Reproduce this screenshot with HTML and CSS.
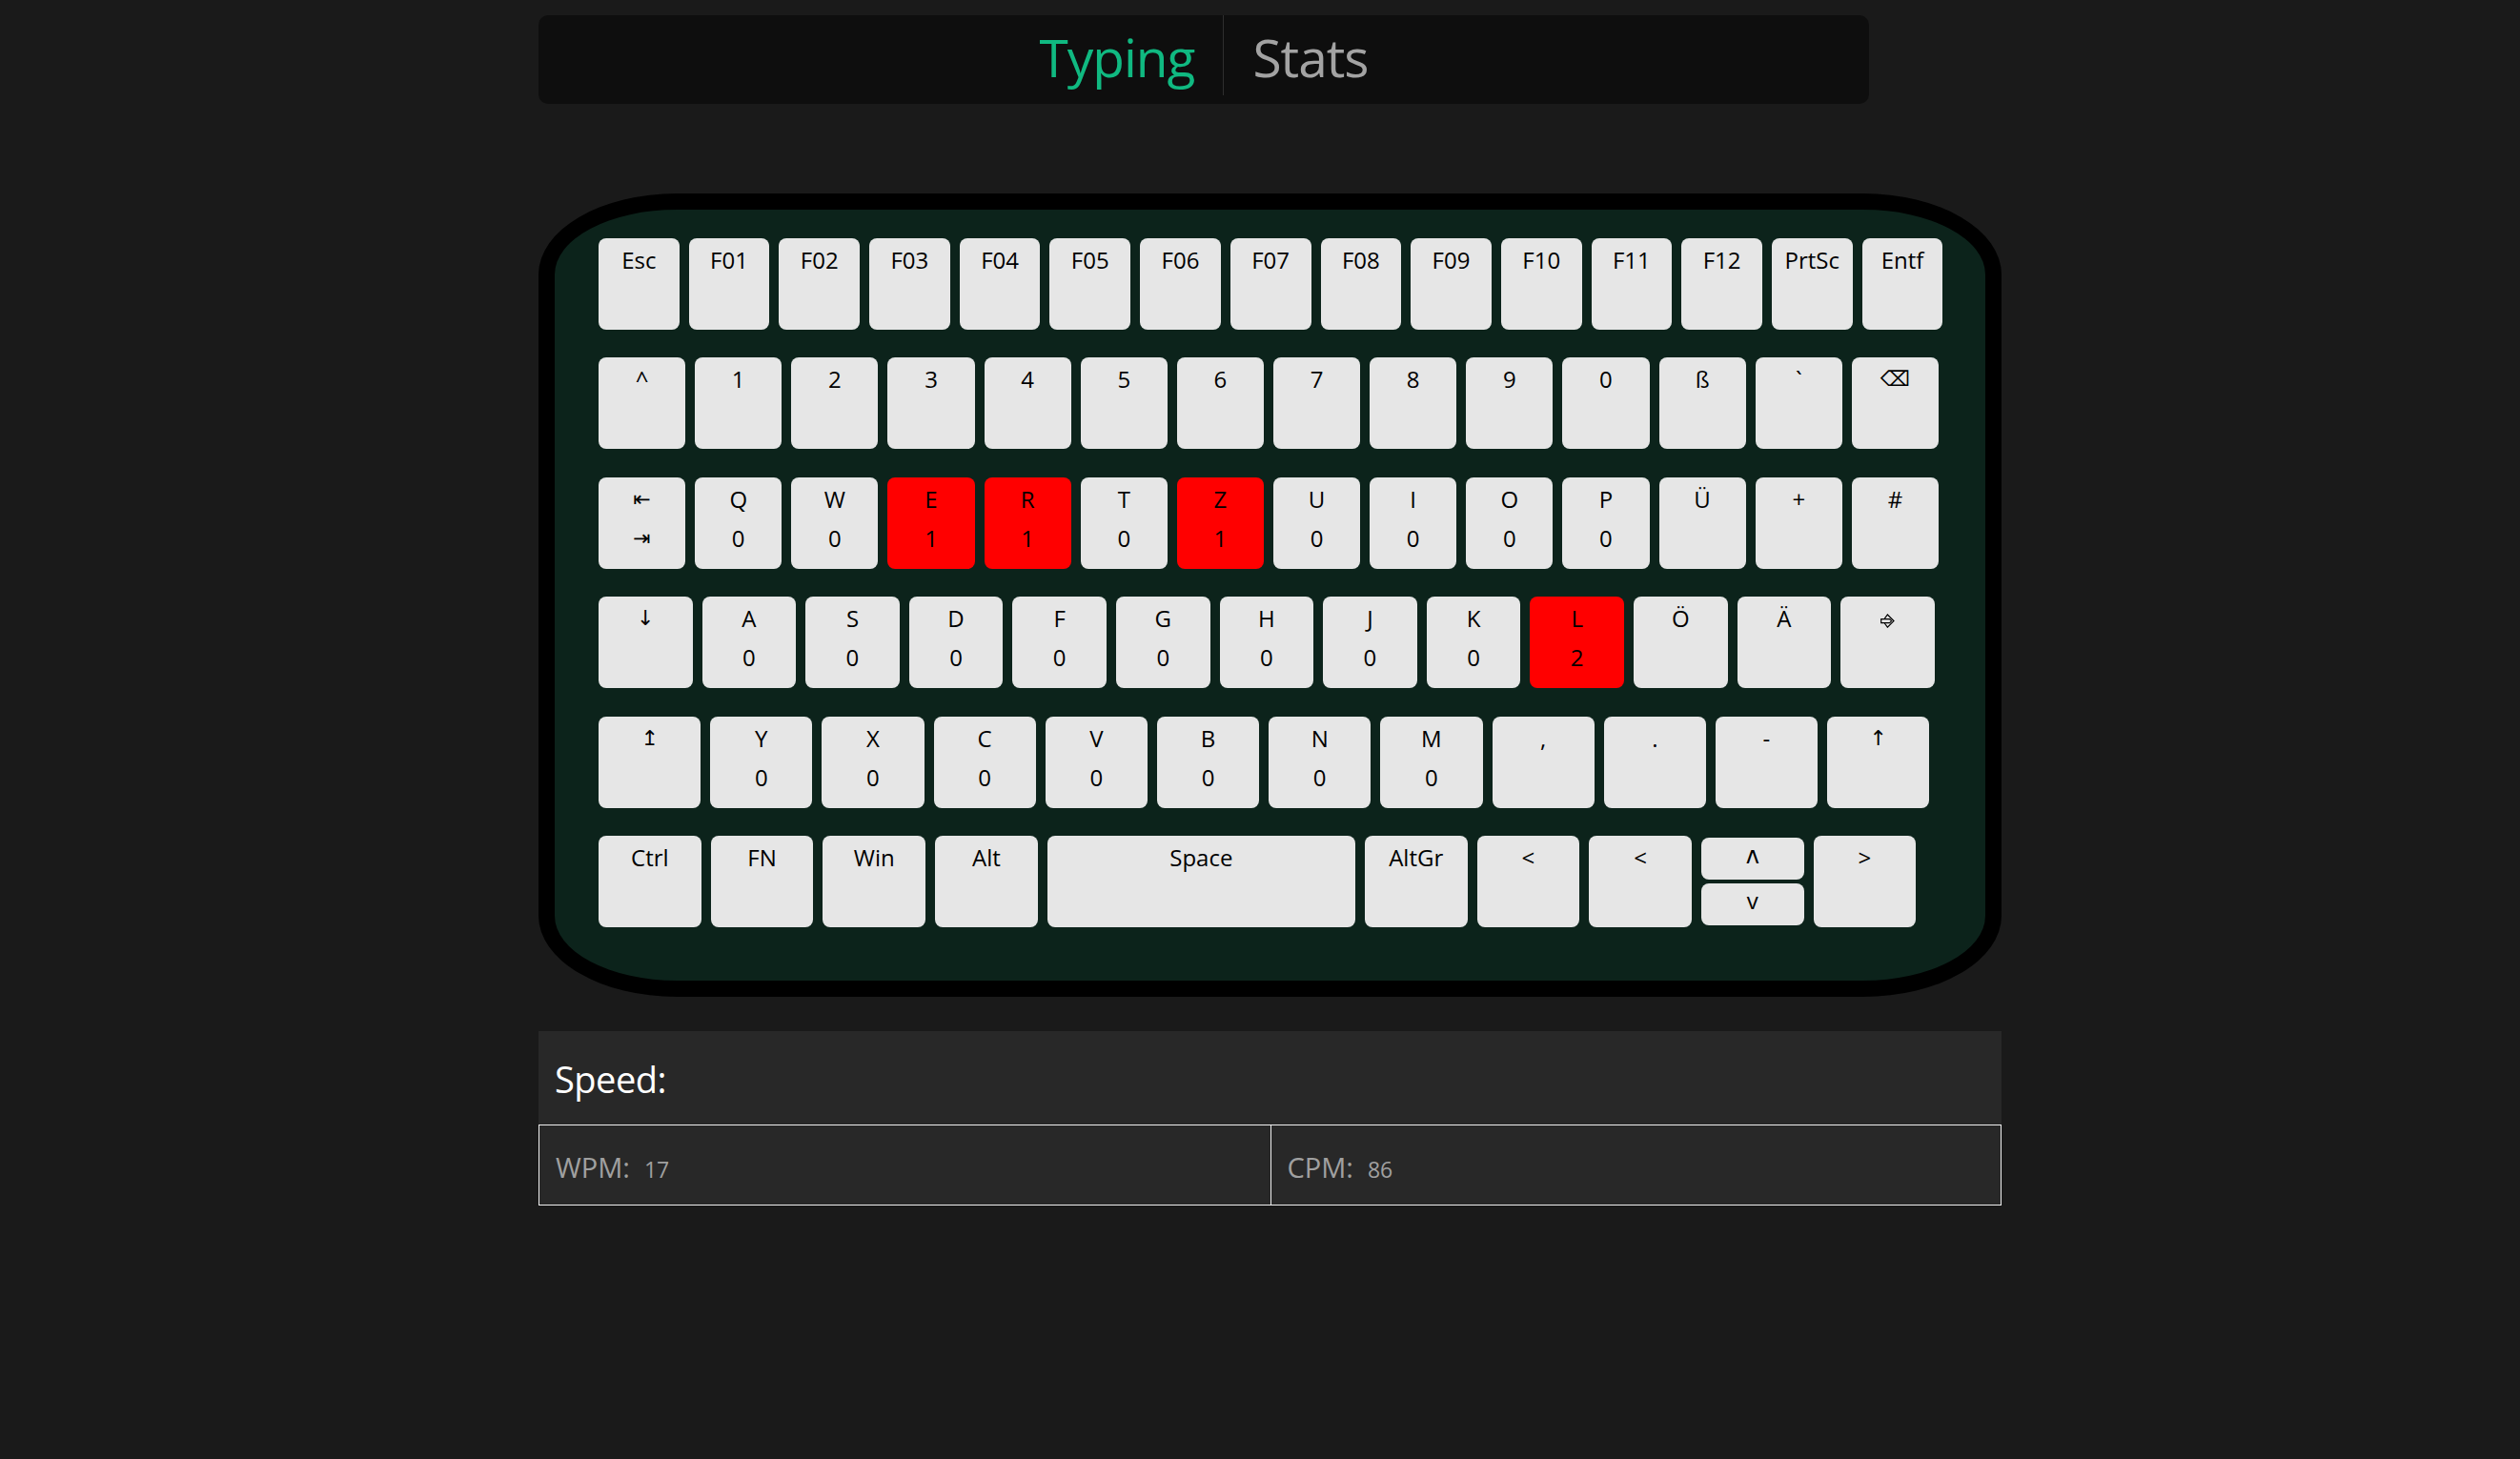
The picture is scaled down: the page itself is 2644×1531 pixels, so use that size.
FILE: index.html
```html
<!DOCTYPE html>
<html lang="de">
<head>
<meta charset="utf-8">
<title>Typing</title>
<link rel="stylesheet" href="styles.css">
</head>
<body>
<div class="page">
  <nav class="nav">
    <div class="tabs">
      <a class="tab active">Typing</a>
      <a class="tab">Stats</a>
    </div>
  </nav>

  <section class="keyboard">
    <div class="row row-f">
      <div class="key"><span class="lbl">Esc</span></div>
      <div class="key"><span class="lbl">F01</span></div>
      <div class="key"><span class="lbl">F02</span></div>
      <div class="key"><span class="lbl">F03</span></div>
      <div class="key"><span class="lbl">F04</span></div>
      <div class="key"><span class="lbl">F05</span></div>
      <div class="key"><span class="lbl">F06</span></div>
      <div class="key"><span class="lbl">F07</span></div>
      <div class="key"><span class="lbl">F08</span></div>
      <div class="key"><span class="lbl">F09</span></div>
      <div class="key"><span class="lbl">F10</span></div>
      <div class="key"><span class="lbl">F11</span></div>
      <div class="key"><span class="lbl">F12</span></div>
      <div class="key"><span class="lbl">PrtSc</span></div>
      <div class="key"><span class="lbl">Entf</span></div>
    </div>
    <div class="row row-n">
      <div class="key"><span class="lbl">^</span></div>
      <div class="key"><span class="lbl">1</span></div>
      <div class="key"><span class="lbl">2</span></div>
      <div class="key"><span class="lbl">3</span></div>
      <div class="key"><span class="lbl">4</span></div>
      <div class="key"><span class="lbl">5</span></div>
      <div class="key"><span class="lbl">6</span></div>
      <div class="key"><span class="lbl">7</span></div>
      <div class="key"><span class="lbl">8</span></div>
      <div class="key"><span class="lbl">9</span></div>
      <div class="key"><span class="lbl">0</span></div>
      <div class="key"><span class="lbl">ß</span></div>
      <div class="key"><span class="lbl">`</span></div>
      <div class="key"><span class="lbl sym">⌫</span></div>
    </div>
    <div class="row row-n">
      <div class="key"><span class="lbl sym">⇤</span><span class="lbl sym">⇥</span></div>
      <div class="key"><span class="lbl">Q</span><span class="lbl">0</span></div>
      <div class="key"><span class="lbl">W</span><span class="lbl">0</span></div>
      <div class="key hit"><span class="lbl">E</span><span class="lbl">1</span></div>
      <div class="key hit"><span class="lbl">R</span><span class="lbl">1</span></div>
      <div class="key"><span class="lbl">T</span><span class="lbl">0</span></div>
      <div class="key hit"><span class="lbl">Z</span><span class="lbl">1</span></div>
      <div class="key"><span class="lbl">U</span><span class="lbl">0</span></div>
      <div class="key"><span class="lbl">I</span><span class="lbl">0</span></div>
      <div class="key"><span class="lbl">O</span><span class="lbl">0</span></div>
      <div class="key"><span class="lbl">P</span><span class="lbl">0</span></div>
      <div class="key"><span class="lbl">Ü</span></div>
      <div class="key"><span class="lbl">+</span></div>
      <div class="key"><span class="lbl">#</span></div>
    </div>
    <div class="row row-a">
      <div class="key"><span class="lbl sym">↓</span></div>
      <div class="key"><span class="lbl">A</span><span class="lbl">0</span></div>
      <div class="key"><span class="lbl">S</span><span class="lbl">0</span></div>
      <div class="key"><span class="lbl">D</span><span class="lbl">0</span></div>
      <div class="key"><span class="lbl">F</span><span class="lbl">0</span></div>
      <div class="key"><span class="lbl">G</span><span class="lbl">0</span></div>
      <div class="key"><span class="lbl">H</span><span class="lbl">0</span></div>
      <div class="key"><span class="lbl">J</span><span class="lbl">0</span></div>
      <div class="key"><span class="lbl">K</span><span class="lbl">0</span></div>
      <div class="key hit"><span class="lbl">L</span><span class="lbl">2</span></div>
      <div class="key"><span class="lbl">Ö</span></div>
      <div class="key"><span class="lbl">Ä</span></div>
      <div class="key"><span class="lbl"><svg class="enter" viewBox="0 0 15 15" width="15" height="15"><path d="M4.3 5.2 L7.4 1 L14 7.6 L7.4 14.2 L4.3 10"/><path d="M0.7 5.6 H9.6 L11.6 7.6 L9.6 9.6 H0.7 Z"/></svg></span></div>
    </div>
    <div class="row row-y">
      <div class="key"><span class="lbl sym">↥</span></div>
      <div class="key"><span class="lbl">Y</span><span class="lbl">0</span></div>
      <div class="key"><span class="lbl">X</span><span class="lbl">0</span></div>
      <div class="key"><span class="lbl">C</span><span class="lbl">0</span></div>
      <div class="key"><span class="lbl">V</span><span class="lbl">0</span></div>
      <div class="key"><span class="lbl">B</span><span class="lbl">0</span></div>
      <div class="key"><span class="lbl">N</span><span class="lbl">0</span></div>
      <div class="key"><span class="lbl">M</span><span class="lbl">0</span></div>
      <div class="key"><span class="lbl">,</span></div>
      <div class="key"><span class="lbl">.</span></div>
      <div class="key"><span class="lbl">-</span></div>
      <div class="key"><span class="lbl sym">↑</span></div>
    </div>
    <div class="row row-b">
      <div class="key"><span class="lbl">Ctrl</span></div>
      <div class="key"><span class="lbl">FN</span></div>
      <div class="key"><span class="lbl">Win</span></div>
      <div class="key"><span class="lbl">Alt</span></div>
      <div class="key space"><span class="lbl">Space</span></div>
      <div class="key"><span class="lbl">AltGr</span></div>
      <div class="key"><span class="lbl">&lt;</span></div>
      <div class="key"><span class="lbl">&lt;</span></div>
      <div class="key-pair">
        <div class="half"><span class="hl">ʌ</span></div>
        <div class="half"><span class="hl">v</span></div>
      </div>
      <div class="key"><span class="lbl">&gt;</span></div>
    </div>
  </section>

  <section class="speed">
    <div class="speed-head">Speed:</div>
    <div class="speed-row">
      <div class="speed-cell">WPM:<span class="val">17</span></div>
      <div class="speed-cell">CPM:<span class="val">86</span></div>
    </div>
  </section>
</div>
</body>
</html>
```

FILE: styles.css
```css
html, body {
  margin: 0;
  padding: 0;
}

body {
  background: #1a1a1a;
  font-family: "Segoe UI", "Open Sans", "DejaVu Sans", sans-serif;
  color: #000;
}

.page {
  width: 1535px;
  margin-left: 565px;
  padding-top: 16px;
}

/* ---------- navigation ---------- */
.nav {
  width: 1396px;
  height: 93px;
  background: #0e0e0e;
  border-radius: 10px;
  display: flex;
  justify-content: center;
}

.tabs {
  display: flex;
  align-items: flex-start;
}

.tab {
  display: block;
  font-size: 55px;
  letter-spacing: -1px;
  line-height: 82px;
  padding: 3px 30px 0;
  height: 81px;
  color: #a3a3a3;
  cursor: pointer;
}

.tab + .tab {
  border-left: 1px solid #2e2e2e;
}

.tab.active {
  color: #10b981;
}

/* ---------- keyboard ---------- */
.keyboard {
  box-sizing: border-box;
  width: 1535px;
  height: 843px;
  margin-top: 94px;
  background: #0c231b;
  border: 17px solid #000;
  border-radius: 145px / 85px;
  padding: 30px 0 0 46px;
  display: flex;
  flex-direction: column;
  gap: 29.4px;
}

.row {
  display: flex;
  gap: 10px;
  height: 96px;
}

.key {
  box-sizing: border-box;
  height: 96px;
  background: #e6e6e6;
  border-radius: 8px;
  padding-top: 2px;
  display: flex;
  flex-direction: column;
  align-items: center;
  text-align: center;
}

.row-f .key { width: 84.7px; }
.row-n .key { width: 91.15px; }
.row-a .key { width: 98.6px; }
.row-y .key { width: 107.2px; }
.row-b .key,
.row-b .key-pair { width: 107.7px; }
.row-b .key.space { width: 323.1px; }

.key.hit {
  background: #ff0000;
}

.lbl {
  display: block;
  font-size: 24px;
  line-height: 41px;
  height: 41px;
  white-space: nowrap;
}

.lbl.sym {
  font-family: "DejaVu Sans", sans-serif;
  font-size: 22px;
}

.enter {
  vertical-align: -1px;
  fill: none;
  stroke: #000;
  stroke-width: 1.2;
}

.key-pair {
  box-sizing: border-box;
  height: 96px;
  padding: 2px 0;
  display: flex;
  flex-direction: column;
  gap: 4px;
}

.half {
  flex: 1;
  background: #e6e6e6;
  border-radius: 8px;
  text-align: center;
  padding-top: 1px;
}

.hl {
  font-size: 24px;
  line-height: 34px;
}

/* ---------- speed panel ---------- */
.speed {
  width: 1535px;
  margin-top: 36px;
  background: #282828;
}

.speed-head {
  height: 98px;
  display: flex;
  align-items: center;
  padding-left: 17px;
  padding-top: 2px;
  box-sizing: border-box;
  font-size: 38px;
  letter-spacing: -0.5px;
  color: #ffffff;
}

.speed-row {
  display: grid;
  grid-template-columns: 1fr 1fr;
  border: 1px solid #f0f0f0;
}

.speed-cell {
  height: 83px;
  display: flex;
  align-items: baseline;
  padding-left: 17px;
  padding-top: 24px;
  box-sizing: border-box;
  font-size: 29px;
  color: #a0a0a0;
}

.speed-cell + .speed-cell {
  border-left: 1px solid #f0f0f0;
}

.val {
  font-size: 23px;
  margin-left: 15px;
}
```
